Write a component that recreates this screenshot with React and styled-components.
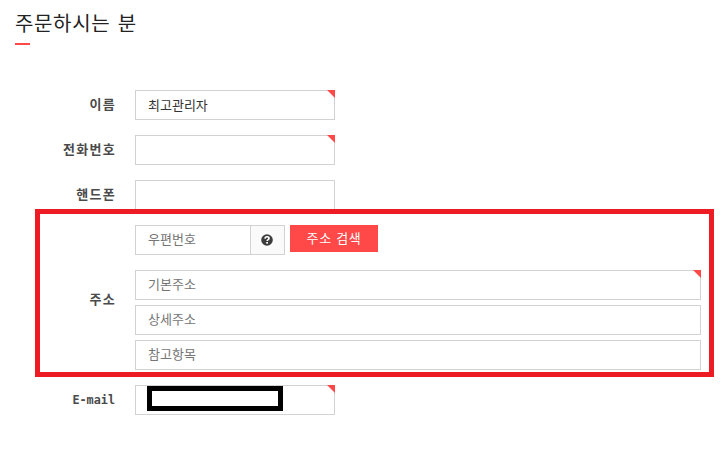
import React from 'react';
import styled, { createGlobalStyle } from 'styled-components';

const GlobalStyle = createGlobalStyle`
  * { box-sizing: border-box; }
  body {
    margin: 0;
    background: #fff;
    color: #444;
    font: 13px/20px "Liberation Sans", "Noto Sans CJK KR", sans-serif;
  }
`;

const Page = styled.main`
  position: relative;
  width: 721px;
  height: 456px;
  padding: 10px 20px 0 15px;
  overflow: hidden;
`;

const Title = styled.h1`
  margin: 0;
  height: 33px;
  font-size: 20px;
  line-height: 28px;
  font-weight: 400;
  letter-spacing: 0.65px;
  word-spacing: 1.2px;
  color: #222;
`;

const TitleRule = styled.div`
  width: 15px;
  height: 2px;
  background: #ff4848;
`;

const Form = styled.form`
  display: flex;
  flex-direction: column;
  gap: 15px;
  margin-top: 45px;
`;

const Row = styled.div`
  display: grid;
  grid-template-columns: 100px 1fr;
  column-gap: 20px;
  align-items: center;
`;

const Label = styled.label`
  text-align: right;
  font-weight: 700;
  letter-spacing: ${(p) => (p.$latin ? '0' : '1.3px')};
  margin-right: ${(p) => (p.$latin ? '0' : '-1px')};
  padding-top: ${(p) => (p.$group ? '4px' : '0')};
  font-family: ${(p) => (p.$latin ? '"DejaVu Sans Mono", monospace' : 'inherit')};
  font-size: ${(p) => (p.$latin ? '11.8px' : '13px')};
  color: #4a4a4a;
`;

const Field = styled.div`
  position: relative;
  width: ${(p) => p.$width || '200px'};
  height: 30px;
`;

const Input = styled.input`
  display: block;
  width: 100%;
  height: 30px;
  margin: 0;
  padding: 0 12px 2px;
  border: 1px solid #d2d2d2;
  border-radius: 0;
  outline: 0;
  background: #fff;
  color: #333;
  font: inherit;
  &::placeholder { color: #757575; opacity: 1; }
`;

const RequiredMark = styled.span`
  position: absolute;
  top: 0;
  right: 0;
  width: 8px;
  height: 8px;
  background: #ff4848;
  clip-path: polygon(0 0, 100% 0, 100% 100%);
`;

const AddressStack = styled.div`
  display: flex;
  flex-direction: column;
  gap: 5px;
`;

const PostcodeRow = styled.div`
  display: flex;
  align-items: flex-start;
  margin-bottom: 10px;
`;

const HelpAddon = styled.span`
  display: flex;
  align-items: center;
  justify-content: center;
  width: 34px;
  height: 30px;
  padding-right: 1px;
  border: 1px solid #d2d2d2;
  border-left: 0;
  background: #fafafa;
`;

const SearchButton = styled.button`
  width: 88px;
  height: 27px;
  margin: 0 0 0 5px;
  padding: 1px 0 0;
  border: 0;
  background: #ff4848;
  color: #fff;
  font: inherit;
  letter-spacing: 0.7px;
`;

const Highlight = styled.div`
  position: absolute;
  left: 35px;
  top: 209px;
  width: 679px;
  height: 168px;
  border: 5px solid #ed1c24;
  pointer-events: none;
`;

const Redaction = styled.div`
  position: absolute;
  left: 12px;
  top: 1px;
  width: 136px;
  height: 25px;
  border: 5px solid #000;
  background: #fff;
`;

const HelpIcon = () => (
  <svg width="12" height="12" viewBox="0 0 12 12" aria-hidden="true">
    <circle cx="6" cy="6" r="5.8" fill="#3d3d3d" />
    <path
      d="M4 4.6C4.1 3.3 4.9 2.8 6 2.8c1.2 0 2 .7 2 1.6 0 1.3-1.8 1.3-1.8 2.6"
      fill="none"
      stroke="#fff"
      strokeWidth="1.6"
    />
    <rect x="5.2" y="8" width="1.8" height="1.6" fill="#fff" />
  </svg>
);

const TextField = ({ width, required, children, ...input }) => (
  <Field $width={width}>
    <Input type="text" {...input} />
    {required && <RequiredMark />}
    {children}
  </Field>
);

export default function App() {
  return (
    <Page>
      <GlobalStyle />
      <Title>주문하시는 분</Title>
      <TitleRule />
      <Form>
        <Row>
          <Label htmlFor="name">이름</Label>
          <TextField id="name" defaultValue="최고관리자" required />
        </Row>
        <Row>
          <Label htmlFor="phone">전화번호</Label>
          <TextField id="phone" required />
        </Row>
        <Row>
          <Label htmlFor="mobile">핸드폰</Label>
          <TextField id="mobile" />
        </Row>
        <Row>
          <Label htmlFor="postcode" $group>주소</Label>
          <AddressStack>
            <PostcodeRow>
              <TextField id="postcode" width="116px" placeholder="우편번호" />
              <HelpAddon><HelpIcon /></HelpAddon>
              <SearchButton type="button">주소 검색</SearchButton>
            </PostcodeRow>
            <TextField width="100%" placeholder="기본주소" required />
            <TextField width="100%" placeholder="상세주소" />
            <TextField width="100%" placeholder="참고항목" />
          </AddressStack>
        </Row>
        <Row>
          <Label htmlFor="email" $latin>E-mail</Label>
          <TextField id="email" required>
            <Redaction />
          </TextField>
        </Row>
      </Form>
      <Highlight />
    </Page>
  );
}
